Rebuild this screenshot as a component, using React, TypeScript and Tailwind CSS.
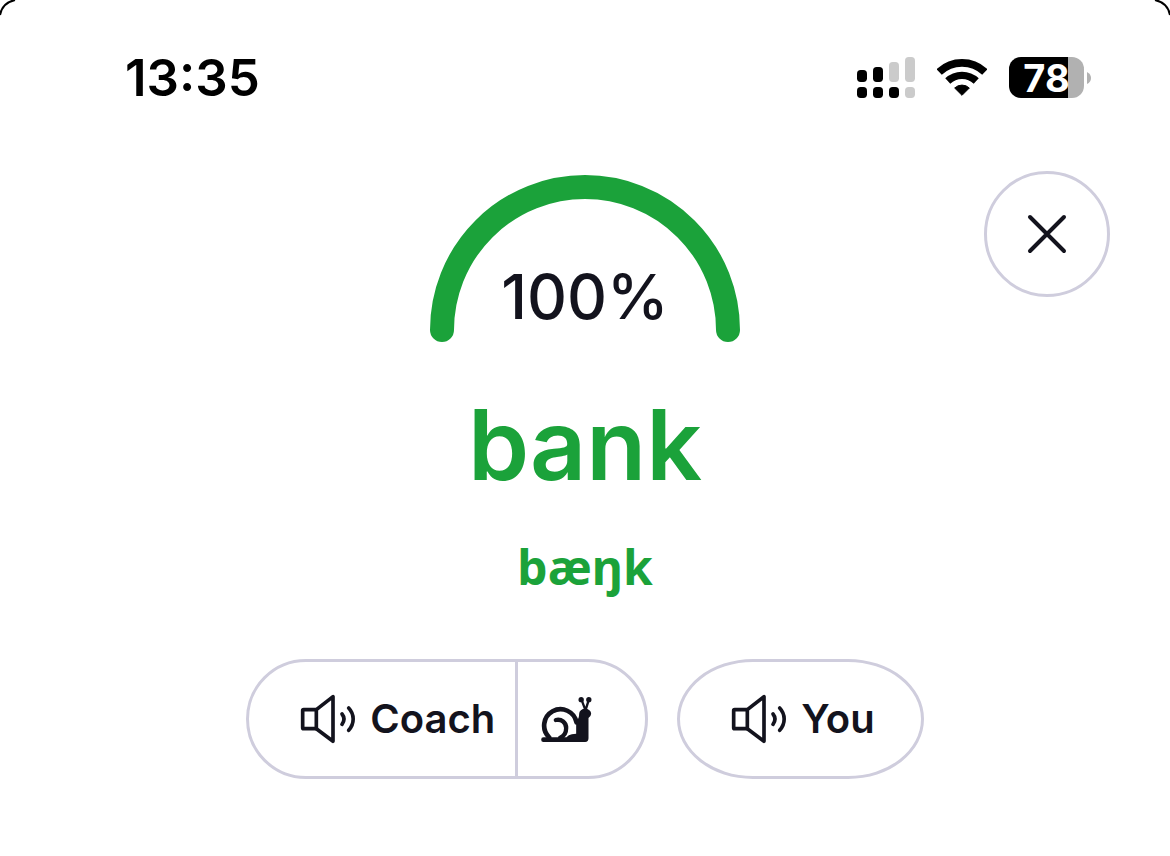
type SignalBar = {
    x: number,
    top: number,
    upper: string,
    lower: string
}

const signalBars: SignalBar[] = [
    { x: 0, top: 39, upper: '#000', lower: '#000' },
    { x: 48, top: 30, upper: '#000', lower: '#000' },
    { x: 96, top: 15, upper: '#cbcbcb', lower: '#000' },
    { x: 144, top: 0, upper: '#cbcbcb', lower: '#cbcbcb' },
]

function SignalIcon() {
    return <svg viewBox="0 0 174 123" className="w-[58px] h-[41px]" aria-hidden="true">
        {signalBars.map((bar) => (
            <g key={bar.x}>
                <rect x={bar.x} y={bar.top} width="30" height={75 - bar.top} rx="11" fill={bar.upper} />
                <rect x={bar.x} y="90" width="30" height="33" rx="11" fill={bar.lower} />
            </g>
        ))}
    </svg>
}

function WifiIcon() {
    return <svg viewBox="0 0 150 111" className="w-[50px] h-[37px]" fill="none" stroke="#000" aria-hidden="true">
        <path d="M6.500 38.900A99.500 99.500 0 0 1 143.500 38.900" strokeWidth="23" />
        <path d="M32.300 66A62 62 0 0 1 117.700 66" strokeWidth="22" />
        <path d="M75 109L53 87A32 32 0 0 1 97 87Z" fill="#000" strokeWidth="3" strokeLinejoin="round" />
    </svg>
}

function Battery({ level }: { level: number }) {
    return <div className="flex items-center gap-[3px]">
        <div className="w-[75px] h-[41px] rounded-xl flex items-center justify-center bg-[linear-gradient(to_right,#000_79%,#b1b1b1_79%)] text-white text-[38px] font-bold leading-none">
            {level}
        </div>
        <svg viewBox="0 0 4 12" className="w-1 h-3" fill="#b1b1b1" aria-hidden="true">
            <path d="M0 0Q4 2 4 6T0 12Z" />
        </svg>
    </div>
}

function SpeakerIcon() {
    return <svg viewBox="0 0 168 150" className="w-14 h-[50px] shrink-0" fill="none" stroke="currentColor" strokeWidth="11" strokeLinecap="round" strokeLinejoin="round" aria-hidden="true">
        <rect x="8" y="47" width="41" height="57" rx="3" />
        <path d="M49 47L99 8V142L49 104" />
        <path d="M126 60Q138 75 126 91" />
        <path d="M146 42C164 61 164 89 146 109" />
    </svg>
}

function SnailIcon() {
    return <svg viewBox="0 0 152 135" className="w-[51px] h-[45px] shrink-0" fill="none" stroke="currentColor" strokeLinecap="round" strokeLinejoin="round" aria-hidden="true">
        <path d="M24 121A49 49 0 1 1 106 76" strokeWidth="14" />
        <path d="M44 69C61 65 75 77 75 93C75 107 67 118 57 122" strokeWidth="13" />
        <path d="M7 121H76Q82 113 92 112L105 110V72Q114 66 114 50A18 15 0 1 1 150 50Q149 59 142 63V124Q142 135 132 135H7A7 7 0 0 1 7 121Z" fill="currentColor" stroke="none" />
        <path d="M133 40L121 8M133 40L143 8" strokeWidth="7" />
        <circle cx="120" cy="8" r="8" fill="currentColor" stroke="none" />
        <circle cx="143" cy="8" r="8" fill="currentColor" stroke="none" />
    </svg>
}

function ScoreGauge({ score }: { score: number }) {
    return <div className="grid mt-1 w-[310px] h-[168px]">
        <svg viewBox="0 0 310 168" className="col-start-1 row-start-1" fill="none" aria-hidden="true">
            <path d="M12 155A143 143 0 0 1 298 155" stroke="#1ba23a" strokeWidth="24" strokeLinecap="round" />
        </svg>
        <p className="col-start-1 row-start-1 self-end justify-self-center pb-4 text-[62px] leading-[60px] font-medium">{score}%</p>
    </div>
}

export default function App() {
    return <div className="relative min-h-screen w-full bg-white text-[#13131d] font-['Inter',sans-serif]">
        <svg className="absolute top-0 left-0 w-4 h-4" viewBox="0 0 16 16" fill="none" stroke="#000" strokeWidth="2" aria-hidden="true">
            <path d="M0 15Q2 3 15 0" />
        </svg>
        <svg className="absolute top-0 right-0 w-4 h-4" viewBox="0 0 16 16" fill="none" stroke="#000" strokeWidth="2" aria-hidden="true">
            <path d="M1 0Q14 3 16 15" />
        </svg>

        <header className="flex items-center justify-between pt-[47px] pl-[125px] pr-[79px] text-black">
            <time className="text-[51px] leading-[61px] font-semibold">13:35</time>
            <div className="flex items-center gap-[22px]">
                <SignalIcon />
                <WifiIcon />
                <Battery level={78} />
            </div>
        </header>

        <main className="pt-[63px] pb-16">
            <div className="grid grid-cols-[1fr_auto_1fr] items-start px-[60px]">
                <div />
                <ScoreGauge score={100} />
                <button type="button" aria-label="Close" className="justify-self-end w-[126px] h-[126px] rounded-full border-3 border-[#cfcddd] flex items-center justify-center">
                    <svg viewBox="0 0 40 40" className="w-10 h-10" fill="none" stroke="currentColor" strokeWidth="4" strokeLinecap="round" aria-hidden="true">
                        <path d="M3 3L37 37M37 3L3 37" />
                    </svg>
                </button>
            </div>

            <div className="flex flex-col items-center text-[#1ba23a]">
                <h1 className="mt-[42px] text-[98px] leading-[120px] font-semibold">bank</h1>
                <p className="mt-[30px] text-5xl leading-[64px] font-bold font-['Noto_Sans',sans-serif]">bæŋk</p>
            </div>

            <div className="mt-[60px] flex justify-center gap-[29px] text-[40px] leading-none font-semibold">
                <div className="flex h-[120px] rounded-full border-3 border-[#cfcddd]">
                    <button type="button" className="flex items-center gap-[14px] pl-[51px] pr-5">
                        <SpeakerIcon />
                        Coach
                    </button>
                    <button type="button" aria-label="Play slowly" className="flex items-center border-l-3 border-[#cfcddd] pl-[23px] pr-[53px]">
                        <SnailIcon />
                    </button>
                </div>
                <button type="button" className="flex items-center gap-[14px] h-[120px] rounded-[76px/60px] border-3 border-[#cfcddd] pl-[51px] pr-[46px]">
                    <SpeakerIcon />
                    You
                </button>
            </div>
        </main>
    </div>
}
